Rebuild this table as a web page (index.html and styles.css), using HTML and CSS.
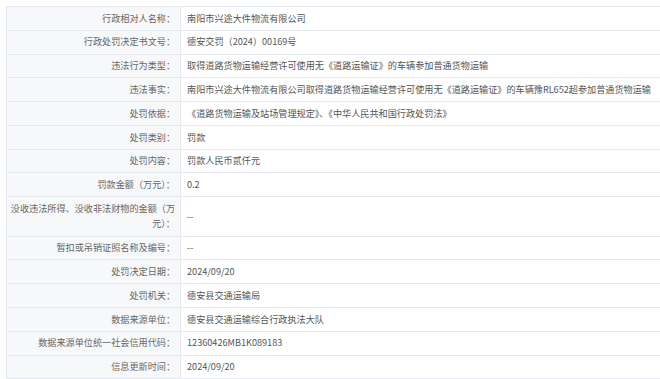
FILE: index.html
```html
<!DOCTYPE html>
<html lang="zh-CN">
<head>
<meta charset="utf-8">
<title>行政处罚信息</title>
<link rel="stylesheet" href="styles.css">
</head>
<body>
<table class="info">
  <tr><th>行政相对人名称：</th><td>南阳市兴途大件物流有限公司</td></tr>
  <tr><th>行政处罚决定书文号：</th><td>德安交罚（2024）00169号</td></tr>
  <tr><th>违法行为类型：</th><td>取得道路货物运输经营许可使用无《道路运输证》的车辆参加普通货物运输</td></tr>
  <tr><th>违法事实：</th><td>南阳市兴途大件物流有限公司取得道路货物运输经营许可使用无《道路运输证》的车辆豫RL652超参加普通货物运输</td></tr>
  <tr><th>处罚依据：</th><td>《道路货物运输及站场管理规定》、《中华人民共和国行政处罚法》</td></tr>
  <tr><th>处罚类别：</th><td>罚款</td></tr>
  <tr><th>处罚内容：</th><td>罚款人民币贰仟元</td></tr>
  <tr><th>罚款金额（万元）：</th><td>0.2</td></tr>
  <tr><th>没收违法所得、没收非法财物的金额（万元）：</th><td>--</td></tr>
  <tr><th>暂扣或吊销证照名称及编号：</th><td>--</td></tr>
  <tr><th>处罚决定日期：</th><td>2024/09/20</td></tr>
  <tr><th>处罚机关：</th><td>德安县交通运输局</td></tr>
  <tr><th>数据来源单位：</th><td>德安县交通运输综合行政执法大队</td></tr>
  <tr><th>数据来源单位统一社会信用代码：</th><td>12360426MB1K089183</td></tr>
  <tr><th>信息更新时间：</th><td>2024/09/20</td></tr>
</table>
</body>
</html>
```

FILE: styles.css
```css
html {
  overflow: hidden;
  background: #fff;
}
body {
  margin: 6px 0 0 6px;
  font-family: "Noto Sans CJK SC", "Noto Sans", sans-serif;
  font-size: 9.15px;
  color: #555;
}
.info {
  border-collapse: collapse;
  width: 654px;
  table-layout: fixed;
}
.info th,
.info td {
  border: 1px solid #e6eaf0;
  line-height: 15.6px;
  padding: 3.6px 6px;
  vertical-align: middle;
  font-weight: normal;
}
.info th {
  width: 167px;
  text-align: right;
  background: #f7f8fa;
  color: #666;
  padding-left: 1px;
  padding-right: 5px;
}
.info td {
  text-align: left;
  color: #555;
  white-space: nowrap;
  overflow: hidden;
  border-right-width: 0;
}
```
